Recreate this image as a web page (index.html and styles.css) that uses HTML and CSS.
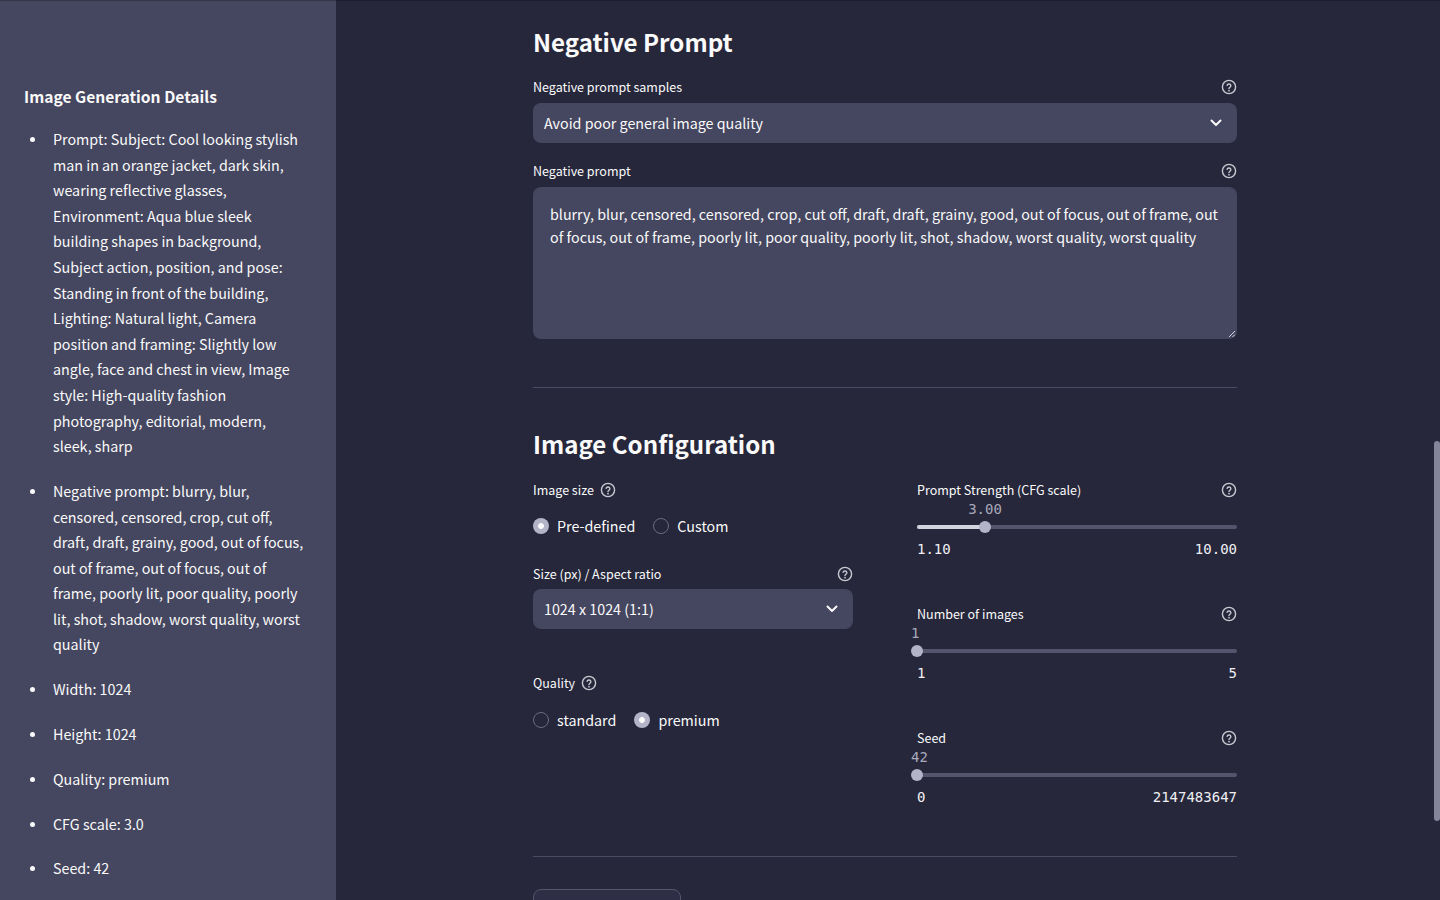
FILE: index.html
```html
<!DOCTYPE html>
<html lang="en">
<head>
<meta charset="utf-8">
<title>Image Generation</title>
<link rel="stylesheet" href="styles.css">
</head>
<body>
<svg class="defs" width="0" height="0" aria-hidden="true">
  <symbol id="help" viewBox="0 0 16 16">
    <circle cx="8" cy="8" r="6.6" fill="none" stroke="currentColor" stroke-width="1.4"/>
    <path d="M6.1 6.3a1.95 1.95 0 0 1 3.8.5c0 1.3-1.9 1.6-1.9 2.7" fill="none" stroke="currentColor" stroke-width="1.4" stroke-linecap="round"/>
    <circle cx="8" cy="11.7" r=".85" fill="currentColor"/>
  </symbol>
  <symbol id="chev" viewBox="0 0 12 8">
    <path d="M1.5 1.5 6 6l4.5-4.5" fill="none" stroke="currentColor" stroke-width="2" stroke-linecap="round" stroke-linejoin="round"/>
  </symbol>
</svg>
<div class="app">
  <aside class="sidebar">
    <h3 class="side-title">Image Generation Details</h3>
    <ul class="details">
      <li>Prompt: Subject: Cool looking stylish man in an orange jacket, dark skin, wearing reflective glasses, Environment: Aqua blue sleek building shapes in background, Subject action, position, and pose: Standing in front of the building, Lighting: Natural light, Camera position and framing: Slightly low angle, face and chest in view, Image style: High-quality fashion photography, editorial, modern, sleek, sharp</li>
      <li>Negative prompt: blurry, blur, censored, censored, crop, cut off, draft, draft, grainy, good, out of focus, out of frame, out of focus, out of frame, poorly lit, poor quality, poorly lit, shot, shadow, worst quality, worst quality</li>
      <li>Width: 1024</li>
      <li>Height: 1024</li>
      <li>Quality: premium</li>
      <li>CFG scale: 3.0</li>
      <li>Seed: 42</li>
    </ul>
  </aside>
  <main class="main">
    <div class="content">
      <h2 class="heading">Negative Prompt</h2>
      <div class="label-row field-first"><span>Negative prompt samples</span><svg class="help"><use href="#help"/></svg></div>
      <div class="select"><span>Avoid poor general image quality</span><svg class="chev"><use href="#chev"/></svg></div>
      <div class="label-row field-next"><span>Negative prompt</span><svg class="help"><use href="#help"/></svg></div>
      <div class="textarea">blurry, blur, censored, censored, crop, cut off, draft, draft, grainy, good, out of focus, out of frame, out of focus, out of frame, poorly lit, poor quality, poorly lit, shot, shadow, worst quality, worst quality
        <svg class="grip" viewBox="0 0 8 8"><path d="M1 7 7 1M4.5 7 7 4.5" stroke="#d8d8e0" stroke-width="1" fill="none"/></svg>
      </div>
      <hr class="rule rule-a">
      <h2 class="heading heading-b">Image Configuration</h2>
      <div class="columns">
        <div class="col">
          <div class="label-row inline"><span>Image size</span><svg class="help"><use href="#help"/></svg></div>
          <div class="radios">
            <span class="radio on"><i></i>Pre-defined</span>
            <span class="radio"><i></i>Custom</span>
          </div>
          <div class="label-row size-label"><span>Size (px) / Aspect ratio</span><svg class="help"><use href="#help"/></svg></div>
          <div class="select"><span>1024 x 1024 (1:1)</span><svg class="chev"><use href="#chev"/></svg></div>
          <div class="label-row inline quality-label"><span>Quality</span><svg class="help"><use href="#help"/></svg></div>
          <div class="radios radios-low">
            <span class="radio"><i></i>standard</span>
            <span class="radio on"><i></i>premium</span>
          </div>
        </div>
        <div class="col">
          <div class="slider">
            <div class="label-row"><span>Prompt Strength (CFG scale)</span><svg class="help"><use href="#help"/></svg></div>
            <div class="value-row"><span class="value" style="left:21.25%">3.00</span></div>
            <div class="track"><b class="fill" style="width:21.25%"></b><b class="thumb" style="left:21.25%"></b></div>
            <div class="ends"><span>1.10</span><span>10.00</span></div>
          </div>
          <div class="slider">
            <div class="label-row"><span>Number of images</span><svg class="help"><use href="#help"/></svg></div>
            <div class="value-row"><span class="value at-start">1</span></div>
            <div class="track"><b class="thumb" style="left:0%"></b></div>
            <div class="ends"><span>1</span><span>5</span></div>
          </div>
          <div class="slider">
            <div class="label-row"><span>Seed</span><svg class="help"><use href="#help"/></svg></div>
            <div class="value-row"><span class="value at-start">42</span></div>
            <div class="track"><b class="thumb" style="left:0%"></b></div>
            <div class="ends"><span>0</span><span>2147483647</span></div>
          </div>
        </div>
      </div>
      <hr class="rule rule-b">
      <div class="button-stub"></div>
    </div>
    <div class="scrollbar"></div>
  </main>
  <div class="top-edge"></div>
</div>
</body>
</html>
```
FILE: styles.css
```css
* { box-sizing: border-box; }
html, body { margin: 0; height: 100%; overflow: hidden; }
body {
  font-family: "Noto Sans CJK SC", "Source Sans Pro", "Noto Sans", sans-serif;
  color: #fafafa;
  background: #26273b;
}
.defs { position: absolute; }
.app { display: flex; height: 900px; overflow: hidden; position: relative; }
.top-edge { position: absolute; left: 0; right: 0; top: 0; height: 1px; background: rgba(0, 0, 0, 0.22); }
.sidebar {
  width: 336px;
  flex: none;
  background: #45465f;
  padding: 83px 32px 0 24px;
  overflow: hidden;
}
.side-title { margin: 0 0 17px; font-size: 15.6px; line-height: 26px; font-weight: 600; }
.details { margin: 0; padding: 0 0 0 29px; list-style: none; font-size: 14.3px; line-height: 25.6px; }
.details li { position: relative; margin-bottom: 19.2px; }
.details li::before {
  content: "";
  position: absolute;
  left: -23px;
  top: 11px;
  width: 5px;
  height: 5px;
  border-radius: 50%;
  background: #fafafa;
}
.main { flex: 1; position: relative; overflow: hidden; }
.content { width: 704px; margin-left: 197px; padding-top: 23px; }
.heading { margin: 0; font-size: 24.1px; line-height: 38px; font-weight: 600; }
.heading-b { margin-top: 37px; }
.label-row {
  display: flex;
  justify-content: space-between;
  align-items: center;
  height: 20px;
  font-size: 12.5px;
  line-height: 20px;
}
.label-row.inline { justify-content: flex-start; gap: 6px; }
.field-first { margin-top: 16px; margin-bottom: 6px; }
.field-next { margin-top: 18px; margin-bottom: 6px; }
.help { width: 16px; height: 16px; color: #c9c9d2; flex: none; }
.select {
  display: flex;
  justify-content: space-between;
  align-items: center;
  height: 40px;
  padding: 0 15px 0 11px;
  background: #45465f;
  border-radius: 8px;
  font-size: 14.3px;
}
.select span { margin-top: -2px; }
.chev { width: 12px; height: 8px; color: #fafafa; }
.textarea {
  position: relative;
  height: 152px;
  padding: 15px 17px;
  background: #45465f;
  border-radius: 8px;
  font-size: 14.3px;
  line-height: 23px;
}
.grip { position: absolute; right: 1px; bottom: 1px; width: 8px; height: 8px; }
.rule { margin: 0; border: 0; height: 1px; background: #4a4b63; }
.rule-a { margin-top: 48px; }
.columns { display: grid; grid-template-columns: 320px 320px; column-gap: 64px; margin-top: 17px; }
.radios { display: flex; gap: 18px; margin-top: 14px; height: 24px; align-items: center; font-size: 14.3px; }
.radios-low { margin-top: 15px; }
.radio { display: flex; align-items: center; gap: 8px; line-height: 24px; }
.radio i {
  width: 16px;
  height: 16px;
  border-radius: 50%;
  border: 1px solid #6b6c80;
  flex: none;
}
.radio.on i {
  border: 0;
  background: radial-gradient(circle, #fafafa 0 2.6px, #b4b4c8 3.2px);
}
.size-label { margin-top: 26px; margin-bottom: 5px; }
.quality-label { margin-top: 44px; }
.slider { height: 124px; }
.value-row { position: relative; height: 20px; }
.value {
  position: absolute;
  top: 1px;
  transform: translateX(-50%);
  font-family: "DejaVu Sans Mono", "Liberation Mono", monospace;
  font-size: 14px;
  line-height: 16px;
  color: #a9a9bb;
}
.value.at-start { left: -6px; transform: none; }
.track {
  position: relative;
  height: 4px;
  border-radius: 2px;
  background: #54556c;
  margin-top: 5px;
}
.fill { position: absolute; left: 0; top: 0; bottom: 0; background: #d4d4de; border-radius: 2px; }
.thumb {
  position: absolute;
  top: -4px;
  width: 12px;
  height: 12px;
  margin-left: -6px;
  border-radius: 50%;
  background: #b4b4c8;
}
.ends {
  display: flex;
  justify-content: space-between;
  margin-top: 12px;
  font-family: "DejaVu Sans Mono", "Liberation Mono", monospace;
  font-size: 14px;
  line-height: 16px;
  color: #f0f0f4;
}
.rule-b { margin-top: 4px; }
.button-stub {
  margin-top: 32px;
  width: 148px;
  height: 40px;
  border: 1px solid #54556c;
  border-radius: 8px;
  background: #2e2f47;
}
.scrollbar {
  position: absolute;
  right: 0;
  top: 441px;
  width: 6px;
  height: 380px;
  background: #85859a;
  border-radius: 3px;
}
```
